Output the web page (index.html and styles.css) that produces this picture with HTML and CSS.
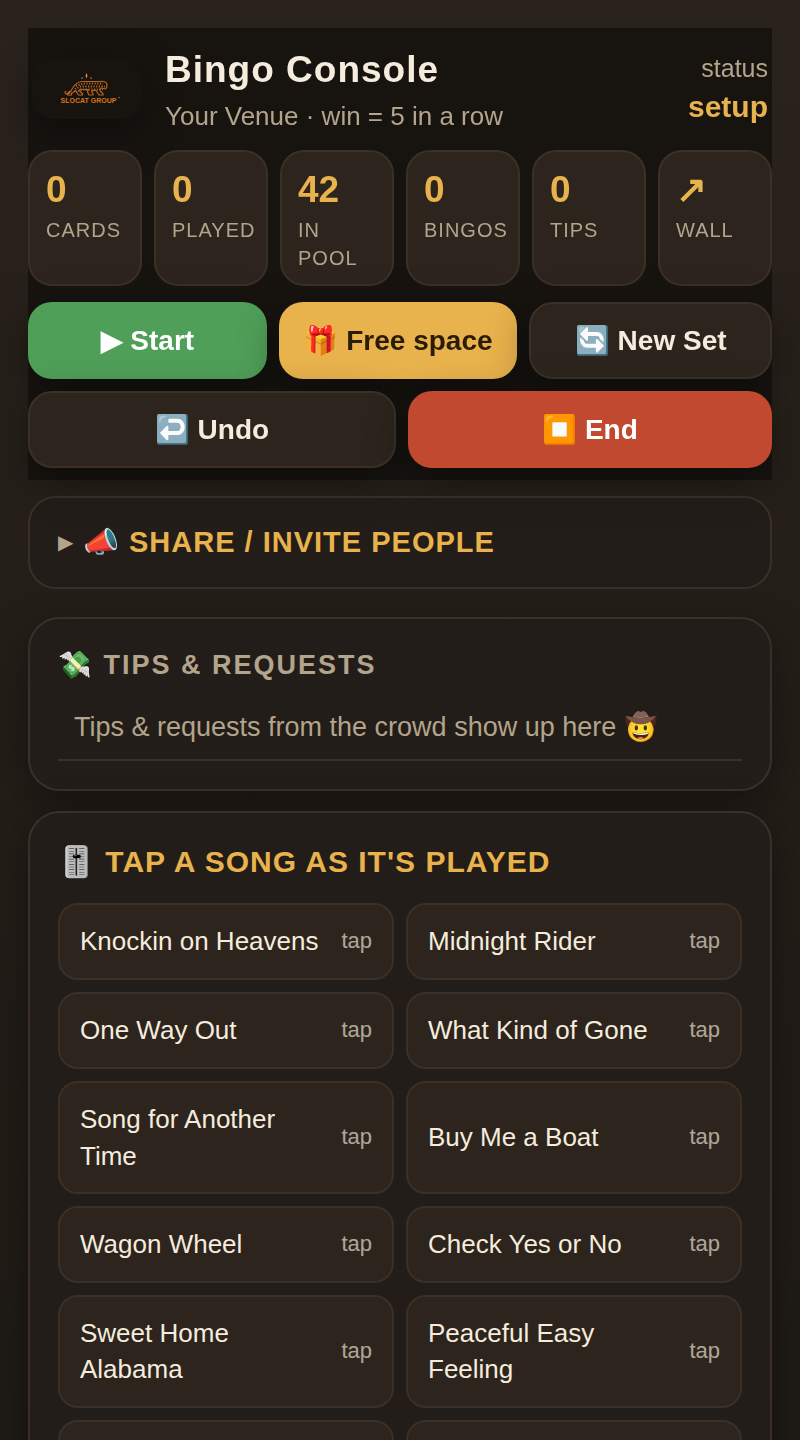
FILE: index.html
```
<!DOCTYPE html>
<html lang="en">

<head>
  <meta charset="UTF-8">
  <meta name="viewport" content="width=device-width, initial-scale=1.0">
  <title>Bingo Console</title>
  <link rel="stylesheet" href="styles.css">
</head>

<body>
  <header class="topbar">
    <div class="brand">
      <svg class="logo" viewBox="0 0 109 60" role="img" aria-label="Slocat Group">
        <g fill="none" stroke="#b9651f" stroke-linecap="round" stroke-linejoin="round">
          <path stroke-width="1.2" d="M34 32.500c-2 0-1 3 2 2.500 3-1 3-4 5-6.500 2-3 5-5.500 9-6h17c3-.5 6-.5 7.500 1.500 1 2 .5 5-1 6l-4-1c-2 0-2 2-1 3.500l2.500 2v1.500h-4l-3-4.500c-2-1-3 0-4.500 1l1.500 2v1.500h-4l-1.500-3c0-1 1-2 1-2.500-3 .5-6 0-8-.5-1 1-1 2 0 3l2 1.500v1.500h-4l-3-4.500c-1 1-3 2-4 3v1.500h-4v-1.500l2-2"/>
          <path stroke-width="1.800" stroke-dasharray="1.200 1.500" stroke-linecap="butt" d="M44 27l7-2.500h20M43 30l6-2.500h24M46 32l5-1.500h20M44 33l2-1"/>
        </g>
        <path fill="#f08a2c" d="M54.500 14l1 2.700-1 2.700-1-2.700zM49.500 18.500h1.300v1.200h-1.300zM58.500 18.500h1.300v1.200h-1.300z"/>
        <text x="28.500" y="43.500" class="logo-text">SLOCAT GROUP</text>
        <path stroke="#a45a1c" stroke-width="1" d="M86 38.500h2"/>
      </svg>
      <div class="brand-text">
        <h1>Bingo Console</h1>
        <div class="sub">Your Venue · win = 5 in a row</div>
      </div>
      <div class="status">
        <div class="status-label">status</div>
        <div class="status-value">setup</div>
      </div>
    </div>

    <div class="stats">
      <div class="stat"><b>0</b><span>Cards</span></div>
      <div class="stat"><b>0</b><span>Played</span></div>
      <div class="stat"><b>42</b><span>In pool</span></div>
      <div class="stat"><b>0</b><span>Bingos</span></div>
      <div class="stat"><b>0</b><span>Tips</span></div>
      <a class="stat" href="#wall"><b>↗</b><span>Wall</span></a>
    </div>

    <div class="controls">
      <button class="btn green">▶ Start</button>
      <button class="btn gold">🎁 Free space</button>
      <button class="btn ghost">🔄 New Set</button>
      <button class="btn ghost">↩️ Undo</button>
      <button class="btn red">⏹️ End</button>
    </div>
  </header>

  <details class="share">
    <summary>📣 <b>SHARE / INVITE PEOPLE</b></summary>
  </details>

  <section class="card">
    <h2 class="muted">💸 Tips &amp; Requests</h2>
    <div class="feed-row">Tips &amp; requests from the crowd show up here 🤠</div>
  </section>

  <section class="card">
    <h2>🎚️ Tap a song as it's played</h2>
    <div class="songs">
      <button class="song"><span>Knockin on Heavens</span><small>tap</small></button>
      <button class="song"><span>Midnight Rider</span><small>tap</small></button>
      <button class="song"><span>One Way Out</span><small>tap</small></button>
      <button class="song"><span>What Kind of Gone</span><small>tap</small></button>
      <button class="song"><span>Song for Another Time</span><small>tap</small></button>
      <button class="song"><span>Buy Me a Boat</span><small>tap</small></button>
      <button class="song"><span>Wagon Wheel</span><small>tap</small></button>
      <button class="song"><span>Check Yes or No</span><small>tap</small></button>
      <button class="song"><span>Sweet Home Alabama</span><small>tap</small></button>
      <button class="song"><span>Peaceful Easy Feeling</span><small>tap</small></button>
      <button class="song" aria-label="Empty slot"></button>
      <button class="song" aria-label="Empty slot"></button>
    </div>
  </section>
</body>

</html>
```
FILE: styles.css
```
:root {
  --bg: #171410;
  --card: #221d18;
  --tile: #2c241d;
  --line: #3a3028;
  --ink: #f5ecdd;
  --muted: #b3a48c;
  --gold: #e8b24c;
  --green: #4f9f58;
  --red: #c1492f;
  --shadow: 0 12px 40px rgba(0, 0, 0, 0.4);
}

* {
  box-sizing: border-box;
}

body {
  margin: 0;
  padding: 28px;
  height: 100vh;
  overflow: hidden;
  font-family: "Liberation Sans", Arial, sans-serif;
  font-size: 28px;
  line-height: 1.4;
  color: var(--ink);
  background: linear-gradient(#2a221c, #241e18 50%, #1f1b15);
}

h1,
h2 {
  margin: 0;
}

.topbar {
  position: sticky;
  top: 0;
  z-index: 5;
  padding: 16px 0 12px;
  background: var(--bg);
}

.brand {
  display: flex;
  align-items: center;
  gap: 24px;
  padding: 0 4px;
}

.logo {
  width: 109px;
  height: 60px;
  border-radius: 20px;
  background: #171410;
  box-shadow: var(--shadow);
}

.logo-text {
  font-size: 7px;
  font-weight: bold;
  fill: #d9731c;
}

.brand-text {
  flex: 1;
}

h1 {
  font-size: 37px;
  letter-spacing: 1px;
}

.sub {
  margin-top: 2px;
  font-size: 26px;
  color: var(--muted);
}

.status {
  text-align: right;
}

.status-label {
  font-size: 25px;
  color: var(--muted);
}

.status-value {
  font-size: 30px;
  font-weight: bold;
  color: var(--gold);
}

.stats {
  display: grid;
  grid-template-columns: repeat(6, minmax(0, 1fr));
  gap: 12px;
  margin: 16px 0;
}

.stat {
  padding: 12px 16px;
  border: 2px solid var(--line);
  border-radius: 24px;
  background: var(--tile);
  color: var(--ink);
  text-decoration: none;
}

.stat b {
  display: block;
  font-size: 37px;
  color: var(--gold);
}

.stat span {
  display: block;
  font-size: 20px;
  letter-spacing: 1px;
  text-transform: uppercase;
  color: var(--muted);
}

.controls {
  display: flex;
  flex-wrap: wrap;
  gap: 12px;
}

button {
  font-family: inherit;
  color: inherit;
  cursor: pointer;
}

.btn {
  flex: 1 1 150px;
  box-sizing: content-box;
  padding: 20px 24px;
  border: none;
  border-radius: 24px;
  font-size: 28px;
  font-weight: bold;
  white-space: nowrap;
  box-shadow: var(--shadow);
}

.green {
  background: var(--green);
  color: #fff;
}

.gold {
  background: var(--gold);
  color: #2a1c05;
}

.red {
  background: var(--red);
  color: #fff;
}

.ghost {
  background: var(--tile);
  border: 2px solid var(--line);
}

.share {
  margin: 16px 0 28px;
  padding: 24px 28px;
  border: 2px solid var(--line);
  border-radius: 28px;
  background: var(--card);
}

.share summary {
  display: flex;
  align-items: center;
  gap: 10px;
  font-size: 29px;
  color: var(--muted);
  cursor: pointer;
}

.share summary::before {
  content: "▶";
  font-size: 20px;
}

.share[open] summary::before {
  content: "▼";
}

.share b {
  letter-spacing: 1px;
  color: var(--gold);
}

.card {
  margin-bottom: 20px;
  padding: 28px;
  border: 2px solid var(--line);
  border-radius: 32px;
  background: var(--card);
  box-shadow: var(--shadow);
}

h2 {
  margin-bottom: 20px;
  font-size: 30px;
  letter-spacing: 1px;
  text-transform: uppercase;
  color: var(--gold);
}

h2.muted {
  margin-bottom: 13px;
  font-size: 27px;
  letter-spacing: 2px;
  color: var(--muted);
}

.feed-row {
  padding: 12px 16px;
  border-bottom: 2px solid var(--line);
  font-size: 27px;
  color: var(--muted);
}

.songs {
  display: grid;
  grid-template-columns: 1fr 1fr;
  gap: 12px;
}

.song {
  display: flex;
  align-items: center;
  justify-content: space-between;
  gap: 12px;
  min-height: 77px;
  padding: 18px 20px;
  border: 2px solid var(--line);
  border-radius: 20px;
  background: var(--tile);
  font-size: 26px;
  line-height: 1.4;
  text-align: left;
}

.song small {
  font-size: 22px;
  opacity: 0.65;
}
```
